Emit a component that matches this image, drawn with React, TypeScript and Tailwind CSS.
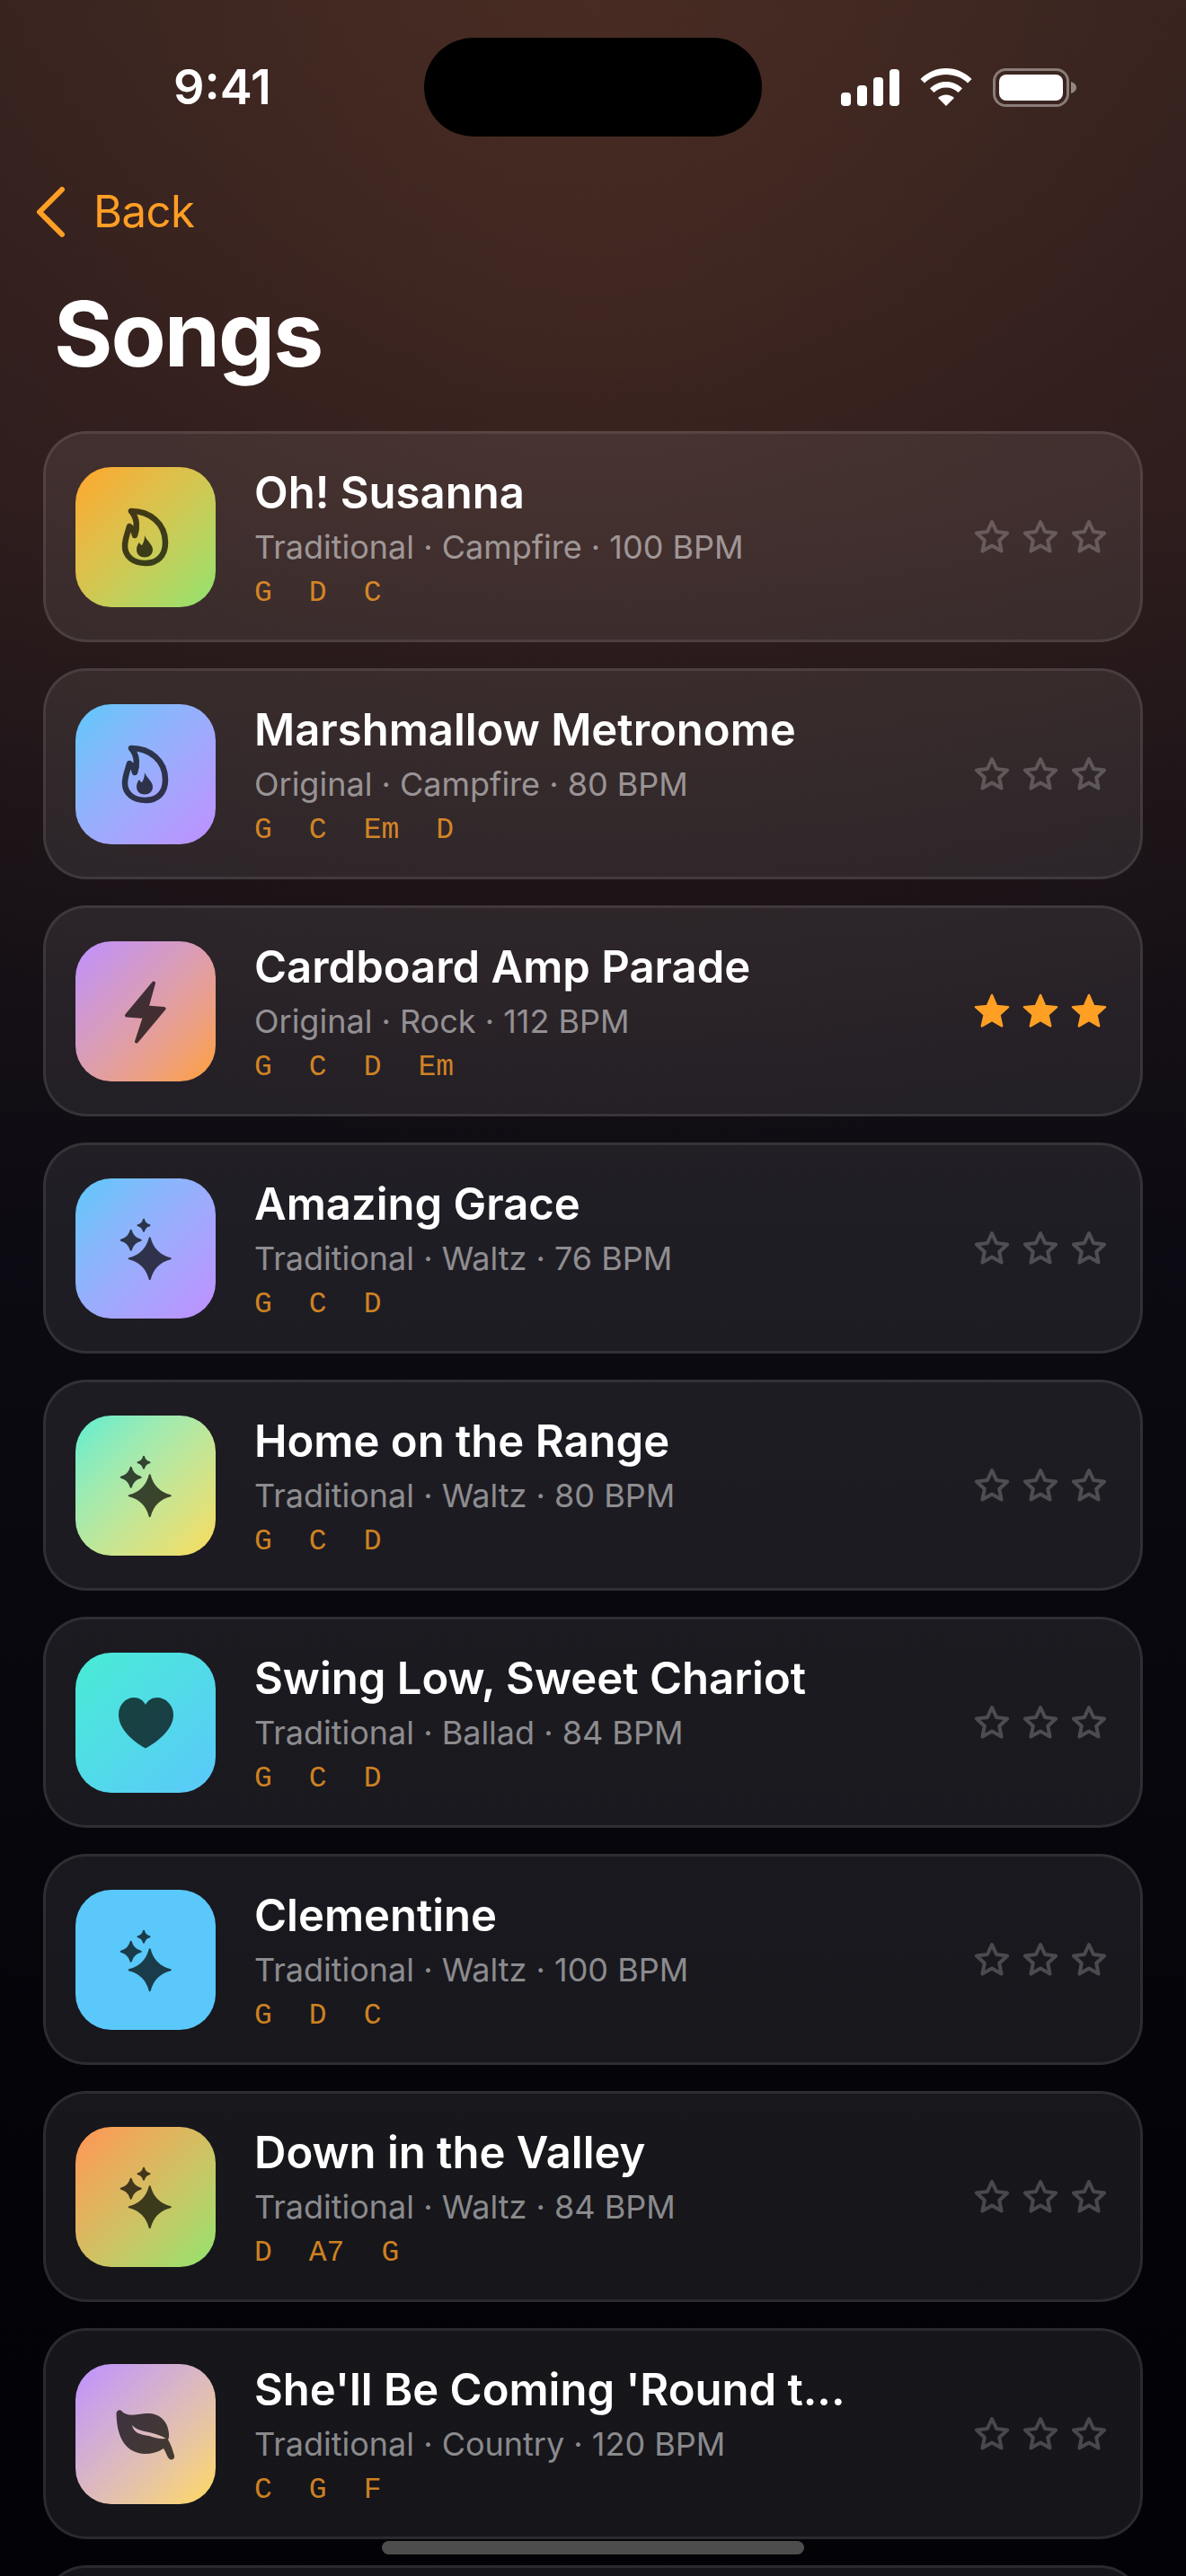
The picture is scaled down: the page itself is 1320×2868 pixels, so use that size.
import type { ReactNode } from "react";

type Song = {
  title: string;
  sub: string;
  chords: string[];
  icon: "flame" | "bolt" | "sparkles" | "heart" | "leaf";
  gradient: string;
  stars?: boolean;
};

const songs: Song[] = [
  { title: "Oh! Susanna", sub: "Traditional · Campfire · 100 BPM", chords: ["G", "D", "C"], icon: "flame", gradient: "bg-gradient-to-br from-[#ffa62b] to-[#8ee36f]" },
  { title: "Marshmallow Metronome", sub: "Original · Campfire · 80 BPM", chords: ["G", "C", "Em", "D"], icon: "flame", gradient: "bg-gradient-to-br from-[#5ac8fa] to-[#bf8fff]" },
  { title: "Cardboard Amp Parade", sub: "Original · Rock · 112 BPM", chords: ["G", "C", "D", "Em"], icon: "bolt", gradient: "bg-gradient-to-br from-[#bf8fff] to-[#ff9f2f]", stars: true },
  { title: "Amazing Grace", sub: "Traditional · Waltz · 76 BPM", chords: ["G", "C", "D"], icon: "sparkles", gradient: "bg-gradient-to-br from-[#5ac8fa] to-[#bf8fff]" },
  { title: "Home on the Range", sub: "Traditional · Waltz · 80 BPM", chords: ["G", "C", "D"], icon: "sparkles", gradient: "bg-gradient-to-br from-[#5aeed0] to-[#f8dc5a]" },
  { title: "Swing Low, Sweet Chariot", sub: "Traditional · Ballad · 84 BPM", chords: ["G", "C", "D"], icon: "heart", gradient: "bg-gradient-to-br from-[#48ecd4] to-[#5ac8fa]" },
  { title: "Clementine", sub: "Traditional · Waltz · 100 BPM", chords: ["G", "D", "C"], icon: "sparkles", gradient: "bg-gradient-to-br from-[#5ac8fa] to-[#5ac8fa]" },
  { title: "Down in the Valley", sub: "Traditional · Waltz · 84 BPM", chords: ["D", "A7", "G"], icon: "sparkles", gradient: "bg-gradient-to-br from-[#ff9455] to-[#8ee36f]" },
  { title: "She'll Be Coming 'Round t...", sub: "Traditional · Country · 120 BPM", chords: ["C", "G", "F"], icon: "leaf", gradient: "bg-gradient-to-br from-[#bf8fff] to-[#ffd95a]" },
];

function fourPoint(cx: number, cy: number, r: number) {
  const k = r * 0.2;
  return `M${cx} ${cy - r}Q${cx + k} ${cy - k} ${cx + r} ${cy}Q${cx + k} ${cy + k} ${cx} ${cy + r}Q${cx - k} ${cy + k} ${cx - r} ${cy}Q${cx - k} ${cy - k} ${cx} ${cy - r}Z`;
}

function SongIcon({ name }: { name: Song["icon"] }) {
  let body: ReactNode = null;
  if (name === "flame") {
    body = (
      <>
        <path
          d="M62 49C83 49 100 63 100 84C100 99 91 107 78 107C65 107 55 100 55 88C55 80 58 74 60 66C63 68 65 71 66 76C69 68 69 57 62 49Z"
          fill="none"
          stroke="black"
          strokeWidth="6.5"
          strokeLinejoin="round"
        />
        <path d="M77 76C79 82 86 86 86 92C86 97 82 100.500 77 100.500C72 100.500 68 97 68 92C68 89 69 86 71 84C72 86 73 87 74 87C76 84 77 80 77 76Z" fill="black" />
      </>
    );
  } else if (name === "bolt") {
    body = (
      <path
        d="M87 46.500L57 82.500L77 84L68 111.500L98.500 75L79.500 73.500Z"
        fill="black"
        stroke="black"
        strokeWidth="4"
        strokeLinejoin="round"
      />
    );
  } else if (name === "sparkles") {
    body = (
      <g fill="black" stroke="black" strokeWidth="2" strokeLinejoin="round">
        <path d={fourPoint(82.700, 89.300, 23)} />
        <path d={fourPoint(61.700, 68.700, 11)} />
        <path d={fourPoint(76, 52.300, 6.500)} />
      </g>
    );
  } else if (name === "heart") {
    body = (
      <path
        d="M78 106.500C70 102 48 88 48 69C48 58 56 50 65 50C71 50 75.500 53 78 58C80.500 53 85 50 91 50C100 50 109 58 109 69C109 88 86 102 78 106.500Z"
        fill="black"
      />
    );
  } else {
    body = (
      <path
        fillRule="evenodd"
        d="M45.500 55C46 51 50 50 52 53C58 59 68 56 78 55C92 54 103 62 104 78C104 81 104 83 103 84C106 89 108 95 110 102C111 107 105 108 103 104C101 100 100 97 98 94C92 98 85 100 77 100C58 99 46 85 45.500 55ZM63 68C68 74 76 74.500 84 76.500C90 78 96 80 101 83C94 83.500 88 82.500 82 80C72 79 64 76 63 68Z"
        fill="black"
      />
    );
  }
  return (
    <svg viewBox="0 0 156 156" className="w-[156px] h-[156px] opacity-70">
      {body}
    </svg>
  );
}

function starPoints(R: number, r: number) {
  const pts: string[] = [];
  for (let i = 0; i < 10; i++) {
    const a = ((-90 + i * 36) * Math.PI) / 180;
    const d = i % 2 === 0 ? R : r;
    pts.push(`${(20 + d * Math.cos(a)).toFixed(2)},${(21 + d * Math.sin(a)).toFixed(2)}`);
  }
  return pts.join(" ");
}

function Star({ filled }: { filled?: boolean }) {
  return (
    <svg viewBox="0 0 40 40" className="w-[40px] h-[40px]">
      {filled ? (
        <polygon points={starPoints(19, 8.8)} fill="#ff9f24" stroke="#ff9f24" strokeWidth="2.500" strokeLinejoin="round" />
      ) : (
        <polygon points={starPoints(18, 8.6)} fill="none" stroke="white" strokeOpacity="0.22" strokeWidth="4" strokeLinejoin="round" />
      )}
    </svg>
  );
}

function SongCard({ song }: { song: Song }) {
  return (
    <div className="h-[235px] shrink-0 flex items-center rounded-[48px] border-[3px] border-white/[0.09] bg-white/[0.08] pl-[33px] pr-[37px]">
      <div className={`w-[156px] h-[156px] shrink-0 rounded-[40px] ${song.gradient}`}>
        <SongIcon name={song.icon} />
      </div>
      <div className="ml-[43px] pt-[3px] flex-1 min-w-0 flex flex-col">
        <div className="text-[49px] leading-[58px] font-semibold text-white">{song.title}</div>
        <div className="mt-[9px] text-[36px] leading-[44px] text-white/50">{song.sub}</div>
        <div className="mt-[12px] flex gap-[41px] font-['Liberation_Mono',monospace] text-[33px] leading-[36px] text-[#ff9f24]/80">
          {song.chords.map((c) => (
            <span key={c}>{c}</span>
          ))}
        </div>
      </div>
      <div className="shrink-0 flex gap-[14px]">
        <Star filled={song.stars} />
        <Star filled={song.stars} />
        <Star filled={song.stars} />
      </div>
    </div>
  );
}

function StatusBar() {
  return (
    <div className="relative flex items-center justify-between h-[60px] mt-[67px] pl-[193px] pr-[122px]">
      <span className="text-[54px] leading-[60px] font-semibold text-white">9:41</span>
      <div className="absolute left-[472px] top-[-25px] w-[376px] h-[110px] rounded-[55px] bg-black" />
      <div className="flex items-center gap-[23px]">
        <svg viewBox="0 0 65 41" className="w-[65px] h-[41px]" fill="white">
          <rect x="0" y="26" width="11" height="15" rx="4" />
          <rect x="18" y="18" width="11" height="23" rx="4" />
          <rect x="36" y="9" width="11" height="32" rx="4" />
          <rect x="54" y="0" width="11" height="41" rx="4" />
        </svg>
        <svg viewBox="0 0 58 42" className="w-[58px] h-[42px]" fill="white">
          <path d="M29 0C40 0 50 4.500 57.500 12L53 16.500C47 10.500 38.500 7 29 7C19.500 7 11 10.500 5 16.500L0.500 12C8 4.500 18 0 29 0Z" />
          <path d="M29 15C36 15 42 17.500 47 22.500L42.500 27C39 23.500 34.500 21.500 29 21.500C23.500 21.500 19 23.500 15.500 27L11 22.500C16 17.500 22 15 29 15Z" />
          <path d="M29 29.500C32.500 29.500 35.500 30.800 38 33L29 42L20 33C22.500 30.800 25.500 29.500 29 29.500Z" />
        </svg>
        <svg viewBox="0 0 93 43" className="w-[93px] h-[43px]">
          <rect x="1.500" y="1.500" width="82" height="40" rx="13" fill="none" stroke="white" strokeOpacity="0.4" strokeWidth="3" />
          <rect x="7" y="7" width="71" height="29" rx="8" fill="white" />
          <path d="M87 15C90.500 16 93 18.500 93 21.500C93 24.500 90.500 27 87 28Z" fill="white" fillOpacity="0.45" />
        </svg>
      </div>
    </div>
  );
}

export default function App() {
  return (
    <div className="relative h-screen overflow-hidden font-['Inter',sans-serif] bg-[radial-gradient(ellipse_800px_620px_at_50%_0%,rgba(255,150,80,0.07),rgba(255,150,80,0)),radial-gradient(ellipse_1100px_1000px_at_50%_300px,rgba(80,45,35,0.35),rgba(80,45,35,0)),linear-gradient(to_bottom,#33211f_0px,#2a1b1c_560px,#1c1418_860px,#0c0a12_1400px,#030308_2500px,#020207_2868px)]">
      <StatusBar />

      <div className="flex items-center h-[60px] mt-[79px] pl-[40px] text-[#ff9f24]">
        <svg viewBox="0 0 33 56" className="w-[33px] h-[56px]" fill="none" stroke="currentColor" strokeWidth="6" strokeLinecap="round" strokeLinejoin="round">
          <path d="M29 3L4 28L29 53" />
        </svg>
        <span className="ml-[31px] text-[49px] tracking-[-0.5px] leading-[60px]">Back</span>
      </div>

      <h1 className="mt-[45px] pl-[60px] text-[100px] tracking-[-2px] leading-[122px] font-bold text-white">Songs</h1>

      <div className="mt-[47px] mx-[48px] flex flex-col gap-[29px]">
        {songs.map((s) => (
          <SongCard key={s.title} song={s} />
        ))}
        <div className="h-[235px] shrink-0 rounded-[48px] border-[3px] border-white/[0.09] bg-white/[0.08]" />
      </div>

      <div className="absolute left-[425px] bottom-[24px] w-[470px] h-[15px] rounded-full bg-[#4d4d4d]" />
    </div>
  );
}
